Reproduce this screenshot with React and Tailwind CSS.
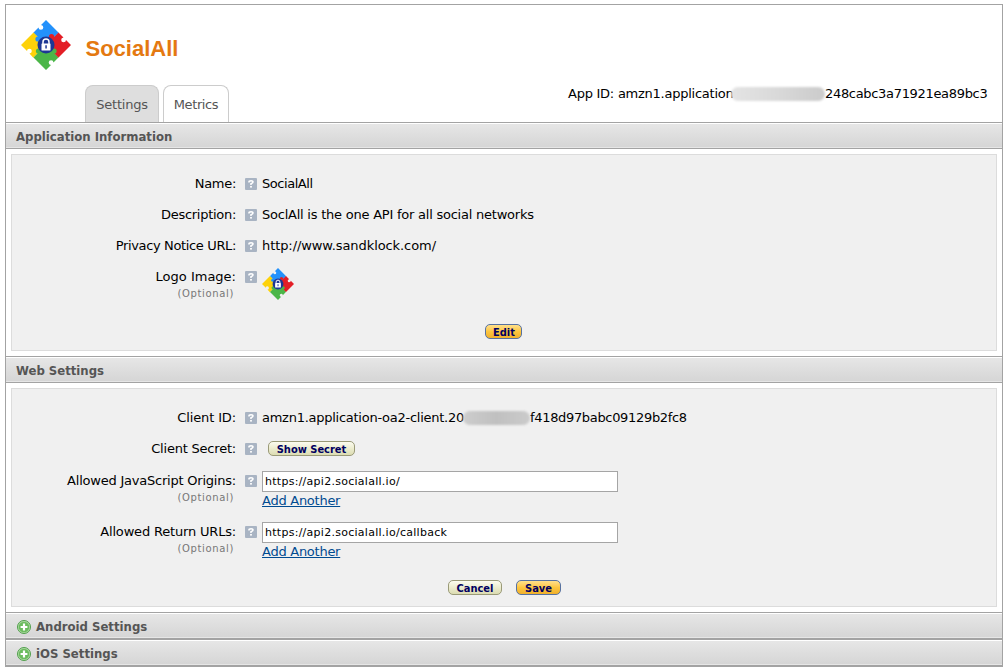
import React from "react";

function Logo({ className }) {
  return (
    <svg viewBox="0 0 50 50" className={className}>
      <path fill="#2391fb" d="M25 0 37.7 12.7 25 25.2 12.3 12.7 17.5 7.5A2.4 2.4 0 1 0 20 5Z" />
      <path fill="#fdd20a" d="M12.5 12.5 25 25 12.3 37.7 8.5 33.5A2.4 2.4 0 1 0 6 31L0 25Z" />
      <path fill="#4bb648" d="M12.5 37.5 25 24.8 37.7 37.3 32.5 42.5A2.4 2.4 0 1 0 30 45L25 50Z" />
      <path fill="#e31e26" d="M37.5 12.5 42.5 17.5A2.4 2.4 0 1 0 45 20L50 25 37.5 37.5 25 25Z" />
      <circle cx="30.5" cy="16.5" r="2.6" fill="#e31e26" />
      <circle cx="17" cy="19" r="2.6" fill="#2391fb" />
      <circle cx="17.5" cy="31" r="2.6" fill="#4bb648" />
      <circle cx="33" cy="31" r="2.6" fill="#4bb648" />
      <circle cx="25" cy="25" r="8.5" fill="#1d3795" />
      <path fill="none" stroke="#fff" strokeWidth="1.5" d="M22 24v-2a3 3 0 0 1 6 0v2" />
      <rect x="20.5" y="23.5" width="9" height="7" rx=".6" fill="#fff" />
      <path fill="#1d3795" d="M24.3 25.3h1.5v3.2h-1.5z" />
    </svg>
  );
}

function Help() {
  return (
    <svg viewBox="0 0 12 12" className="mt-[5px] h-3 w-3 shrink-0">
      <rect width="12" height="12" rx="1" fill="#a9b4c3" />
      <path d="M4 4.4V3.9Q4 2.8 6 2.8T8 4.1Q8 5 6 5.8V7" fill="none" stroke="#fff" strokeWidth="1.6" />
      <rect x="5.1" y="8" width="1.8" height="1.6" fill="#fff" />
    </svg>
  );
}

function Plus() {
  return (
    <svg viewBox="0 0 14 14" className="mr-[5px] ml-px h-[14px] w-[14px] shrink-0">
      <circle cx="7" cy="7" r="6.5" fill="#b5dcaa" stroke="#4f9e4a" />
      <circle cx="7" cy="7" r="5.3" fill="#6cbc5f" />
      <path d="M7 3.6v6.8M3.6 7h6.8" stroke="#fff" strokeWidth="2.2" />
    </svg>
  );
}

function Bar({ children }) {
  return (
    <div className="flex h-[27px] items-center border-y border-[#a3a3a3] bg-gradient-to-b from-[#e7e7e7] to-[#d5d5d5] pt-[2px] pl-[10px] font-['DejaVu_Sans_Condensed','DejaVu_Sans',sans-serif] text-[13px] font-bold text-[#555] shadow-[inset_0_1px_0_#fff,inset_0_-1px_0_#e6e6e6]">
      {children}
    </div>
  );
}

function Row({ label, tracking = "", optional, className, children }) {
  return (
    <div className={`flex items-start ${className}`}>
      <div className="mr-[9px] w-[224px] shrink-0 text-right leading-[22px]">
        <div className={`whitespace-nowrap ${tracking}`}>{label}</div>
        {optional && <div className="-mt-[2px] pr-[2px] text-[10px] leading-[16px] tracking-[0.65px] text-[#777]">(Optional)</div>}
      </div>
      <Help />
      <div className="ml-[5px] whitespace-nowrap leading-[22px]">{children}</div>
    </div>
  );
}

function Button({ gold, className, children }) {
  const tone = gold
    ? "border-[#5872a0] bg-gradient-to-b from-[#ffe08a] via-[#fdc63f] to-[#f0b02c]"
    : "border-[#9a9a78] bg-gradient-to-b from-[#fcfcf0] via-[#ececcf] to-[#dcdcb2]";
  return (
    <button className={`flex h-[15px] items-center justify-center rounded-[5px] border pt-[2px] font-['DejaVu_Sans_Condensed','DejaVu_Sans',sans-serif] text-[11px] font-bold leading-none text-[#000060] ${tone} ${className}`}>
      {children}
    </button>
  );
}

function Field({ value }) {
  return (
    <>
      <input
        readOnly
        value={value}
        className="mt-px block h-[21px] w-[356px] border border-[#a5a5a5] bg-white px-[2px] pt-px text-[11px] tracking-[0.27px] text-black outline-none"
      />
      <a className="block text-[13px] leading-[17px] tracking-[-0.26px] text-[#004b91] underline">Add Another</a>
    </>
  );
}

export default function App() {
  return (
    <div className="h-[672px] w-[1008px] bg-white pt-1 pl-[5px] font-['Verdana','DejaVu_Sans',sans-serif] text-[13px] text-black">
      <div className="w-[998px] border border-[#a3a3a3]">
        <header className="flex h-[117px]">
          <Logo className="mt-[15px] ml-[15px] h-[50px] w-[50px] shrink-0" />
          <div className="ml-[14px] flex flex-1 flex-col justify-between">
            <h1 className="mt-[30px] pl-[0.5px] font-['Liberation_Sans',sans-serif] text-[22px] leading-[28px] font-bold text-[#e47911]">SocialAll</h1>
            <div className="flex gap-1">
              <div className="flex h-[37px] w-[74px] items-center justify-center rounded-t-[8px] border border-b-0 border-[#ccc] bg-[#dedede] pt-px tracking-[-0.22px] text-[#555]">Settings</div>
              <div className="flex h-[37px] w-[66px] items-center justify-center rounded-t-[8px] border border-b-0 border-[#ccc] bg-white pt-px tracking-[-0.4px] text-[#555]">Metrics</div>
            </div>
          </div>
          <div className="mt-[78px] mr-[15px] flex h-[22px] items-center whitespace-nowrap">
            <span className="w-[163px] tracking-[-0.25px]">App ID: amzn1.application</span>
            <span className="h-[14px] w-[94px] rounded-full bg-gradient-to-r from-[#e4e4e4] via-[#d9d9d9] to-[#cbcbcb] blur-[1px]" />
            <span className="w-[162px] tracking-[-0.32px]">248cabc3a71921ea89bc3</span>
          </div>
        </header>

        <Bar>Application Information</Bar>
        <section className="mx-[5px] my-[5px] h-[197px] border border-[#dcdcdc] bg-[#f0f0f0] pt-[18px]">
          <Row label="Name:" tracking="tracking-[-0.3px]" className="h-[31px]"><span className="tracking-[-0.45px]">SocialAll</span></Row>
          <Row label="Description:" tracking="tracking-[-0.29px]" className="h-[31px]"><span className="tracking-[-0.23px]">SoclAll is the one API for all social networks</span></Row>
          <Row label="Privacy Notice URL:" tracking="tracking-[-0.36px]" className="h-[31px]"><span className="tracking-[-0.08px]">http://www.sandklock.com/</span></Row>
          <Row label="Logo Image:" optional className="h-[58px]">
            <Logo className="mt-[2px] h-8 w-8" />
          </Row>
          <div className="flex pl-[473px]">
            <Button gold className="w-[37px] pl-px">Edit</Button>
          </div>
        </section>

        <Bar>Web Settings</Bar>
        <section className="mx-[5px] my-[5px] h-[219px] border border-[#dcdcdc] bg-[#f0f0f0] pt-[18px]">
          <Row label="Client ID:" tracking="tracking-[-0.12px]" className="h-[31px]">
            <div className="flex items-center">
              <span className="w-[201px] tracking-[-0.26px]">amzn1.application-oa2-client.20</span>
              <span className="h-[14px] w-[67px] rounded-full bg-gradient-to-r from-[#cdcdcd] via-[#c0c0c0] to-[#cbcbcb] blur-[1px]" />
              <span className="tracking-[-0.33px]">f418d97babc09129b2fc8</span>
            </div>
          </Row>
          <Row label="Client Secret:" tracking="tracking-[-0.21px]" className="h-[32px]">
            <Button className="mt-[3px] ml-[6px] w-[87px]">Show Secret</Button>
          </Row>
          <Row label="Allowed JavaScript Origins:" tracking="tracking-[-0.22px]" optional className="h-[51px]">
            <Field value="https://api2.socialall.io/" />
          </Row>
          <Row label="Allowed Return URLs:" tracking="tracking-[-0.18px]" optional className="h-[59px]">
            <Field value="https://api2.socialall.io/callback" />
          </Row>
          <div className="flex gap-[14px] pl-[436px]">
            <Button className="w-[54px]">Cancel</Button>
            <Button gold className="w-[45px]">Save</Button>
          </div>
        </section>

        <Bar><Plus />Android Settings</Bar>
        <Bar><Plus />iOS Settings</Bar>
      </div>
    </div>
  );
}
